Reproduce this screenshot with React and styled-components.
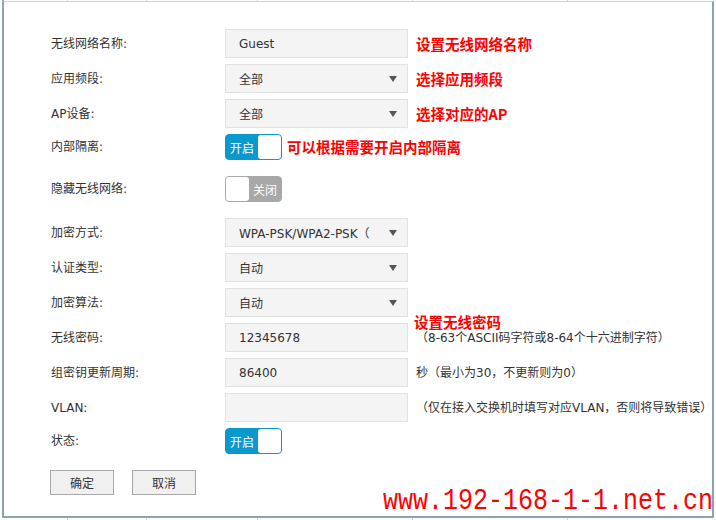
import React from 'react';
import styled, { createGlobalStyle } from 'styled-components';

const FONT = `"DejaVu Sans", "Noto Sans CJK SC", sans-serif`;
const CJK = `"Noto Sans CJK SC", sans-serif`;
const EDGE = '#8aa3bb';

const GlobalStyle = createGlobalStyle`
  html, body {
    margin: 0;
    padding: 0;
    background: #fff;
  }
  body {
    font-family: ${FONT};
    font-size: 12px;
    color: #333;
  }
`;

// Page frame: the settings panel sits inside a larger table, only its edges show
const Page = styled.div`
  position: relative;
  width: 716px;
  height: 520px;
  padding-left: 2px;
  box-sizing: border-box;
  overflow: hidden;
`;

const EdgeStrip = styled.div`
  display: flex;
  height: ${props => props.$h}px;
  border-left: 2px solid ${props => props.$left ? EDGE : 'transparent'};
`;

const EdgeCell = styled.div`
  width: ${props => props.$w}px;
  flex-shrink: 0;
  box-sizing: border-box;
  border-right: 1px solid #d4d4d4;
`;

const Panel = styled.div`
  width: 712px;
  height: 517px;
  box-sizing: border-box;
  border-top: 1px solid #d3d3d3;
  border-left: 2px solid ${EDGE};
  border-right: 2px solid ${EDGE};
  border-bottom: 2px solid ${EDGE};
  padding: 27px 0 0 47px;
`;

const Form = styled.div`
  display: flex;
  flex-direction: column;
  gap: 6px;
`;

const Row = styled.div`
  display: flex;
  align-items: center;
  margin-top: ${props => props.$extra || 0}px;
`;

const Label = styled.div`
  width: 174px;
  flex-shrink: 0;
  font-size: 12px;
  line-height: 16px;
  color: #333;
`;

const Field = styled.div`
  width: 183px;
  height: 29px;
  flex-shrink: 0;
  box-sizing: border-box;
  border: 1px solid #e2e2e2;
  background: #f4f4f4;
  display: flex;
  align-items: center;
  padding: 0 10px 0 13px;
  font-size: 12px;
  color: #333;
`;

const Value = styled.span`
  flex: 1;
  white-space: nowrap;
`;

const Arrow = styled.span`
  width: 0;
  height: 0;
  margin-left: 5px;
  border-left: 4.5px solid transparent;
  border-right: 4.5px solid transparent;
  border-top: 6px solid #555;
`;

const Switch = styled.div`
  width: 57px;
  height: 26px;
  flex-shrink: 0;
  box-sizing: border-box;
  display: flex;
  flex-direction: ${props => props.$on ? 'row' : 'row-reverse'};
  border: 1px solid ${props => props.$on ? '#0a99cf' : '#a8a8a8'};
  background: ${props => props.$on ? '#0a99cf' : '#a8a8a8'};
  border-radius: 4px;
`;

const SwitchText = styled.span`
  flex: 1;
  display: flex;
  align-items: center;
  justify-content: center;
  font-family: ${CJK};
  font-size: 12px;
  color: #fff;
`;

const Knob = styled.span`
  width: 23px;
  background: #fff;
  border-radius: 3px;
`;

const Note = styled.span`
  margin-left: ${props => props.$ml ?? 8}px;
  font-family: ${CJK};
  font-size: 14.5px;
  font-weight: bold;
  line-height: 18px;
  color: #ff0000;
  white-space: nowrap;
`;

const Hint = styled.span`
  position: relative;
  margin-left: 8px;
  font-size: 12px;
  line-height: 16px;
  color: #333;
  white-space: nowrap;
`;

const Callout = styled(Note)`
  position: absolute;
  left: -2px;
  top: -17px;
  margin-left: 0;
`;

const Actions = styled.div`
  display: flex;
  gap: 18px;
  margin: 16px 0 0 -1px;
`;

const Button = styled.button`
  width: 64px;
  height: 25px;
  padding: 0;
  border: 1px solid #a9a9a9;
  border-radius: 0;
  background: #f0f0f0;
  font-family: ${CJK};
  font-size: 12px;
  color: #333;
`;

const Watermark = styled.div`
  position: absolute;
  left: 383px;
  top: 491px;
  font-family: "Liberation Mono", monospace;
  font-size: 25px;
  line-height: 25px;
  color: #ff0000;
  white-space: nowrap;
  transform: scaleY(1.18);
  transform-origin: left bottom;
`;

const EDGE_CELLS = [64, 79, 111, 155, 155];

const Select = ({ value }) => (
    <Field>
        <Value>{value}</Value>
        <Arrow />
    </Field>
);

const Toggle = ({ on }) => (
    <Switch $on={on}>
        <SwitchText>{on ? '开启' : '关闭'}</SwitchText>
        <Knob />
    </Switch>
);

export default function App() {
    return (
        <>
            <GlobalStyle />
            <Page>
                <EdgeStrip $h={1} $left>
                    {EDGE_CELLS.map((w, i) => <EdgeCell key={i} $w={w} />)}
                </EdgeStrip>
                <Panel>
                    <Form>
                        <Row>
                            <Label>无线网络名称:</Label>
                            <Field>Guest</Field>
                            <Note>设置无线网络名称</Note>
                        </Row>
                        <Row>
                            <Label>应用频段:</Label>
                            <Select value="全部" />
                            <Note>选择应用频段</Note>
                        </Row>
                        <Row>
                            <Label>AP设备:</Label>
                            <Select value="全部" />
                            <Note>选择对应的AP</Note>
                        </Row>
                        <Row>
                            <Label>内部隔离:</Label>
                            <Toggle on />
                            <Note $ml={5}>可以根据需要开启内部隔离</Note>
                        </Row>
                        <Row $extra={10}>
                            <Label>隐藏无线网络:</Label>
                            <Toggle on={false} />
                        </Row>
                        <Row $extra={10}>
                            <Label>加密方式:</Label>
                            <Select value="WPA-PSK/WPA2-PSK（" />
                        </Row>
                        <Row>
                            <Label>认证类型:</Label>
                            <Select value="自动" />
                        </Row>
                        <Row>
                            <Label>加密算法:</Label>
                            <Select value="自动" />
                        </Row>
                        <Row>
                            <Label>无线密码:</Label>
                            <Field>12345678</Field>
                            <Hint>
                                <Callout>设置无线密码</Callout>
                                （8-63个ASCII码字符或8-64个十六进制字符）
                            </Hint>
                        </Row>
                        <Row>
                            <Label>组密钥更新周期:</Label>
                            <Field>86400</Field>
                            <Hint>秒（最小为30，不更新则为0）</Hint>
                        </Row>
                        <Row>
                            <Label>VLAN:</Label>
                            <Field />
                            <Hint>（仅在接入交换机时填写对应VLAN，否则将导致错误）</Hint>
                        </Row>
                        <Row>
                            <Label>状态:</Label>
                            <Toggle on />
                        </Row>
                    </Form>
                    <Actions>
                        <Button>确定</Button>
                        <Button>取消</Button>
                    </Actions>
                </Panel>
                <EdgeStrip $h={2}>
                    {EDGE_CELLS.map((w, i) => <EdgeCell key={i} $w={w} />)}
                </EdgeStrip>
                <Watermark>www.192-168-1-1.net.cn</Watermark>
            </Page>
        </>
    );
}
